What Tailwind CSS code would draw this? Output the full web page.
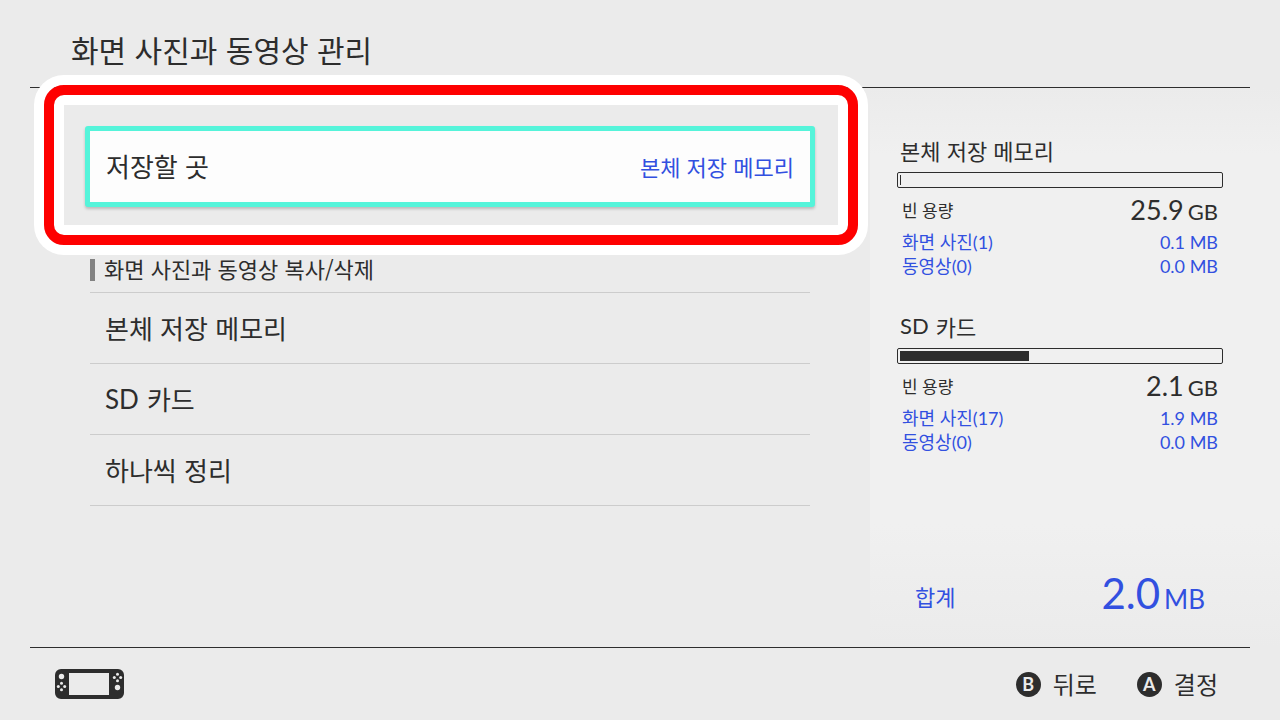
<!DOCTYPE html>
<html lang="ko">
<head>
    <meta charset="UTF-8">
    <meta name="viewport" content="width=device-width, initial-scale=1.0">
    <title>화면 사진과 동영상 관리</title>
    <script src="https://cdn.jsdelivr.net/npm/@tailwindcss/browser@4"></script>
</head>
<body class="min-h-screen flex flex-col bg-[#ebebeb] text-[#2d2d2d] font-['Noto_Sans_CJK_KR',sans-serif]">
    <header class="px-[30px]">
        <h1 class="h-[88px] pt-[10px] px-[41px] border-b border-[#2d2d2d] flex items-center text-[30px] leading-8">화면 사진과 동영상 관리</h1>
    </header>

    <main class="flex-1 flex">
        <!-- Settings list -->
        <section class="flex-1 pl-[90px] pr-[60px] pt-[38px]">
            <div class="relative -mx-[5px]">
                <button type="button" class="w-full h-[81px] px-4 pb-[2px] flex items-center justify-between rounded-[3px] border-5 border-[#55f4da] bg-[#fdfdfd] shadow-[0_2px_3px_rgba(0,0,0,0.2)]">
                    <span class="text-[26px] leading-8">저장할 곳</span>
                    <span class="text-[22px] leading-8 text-[#3250e0]">본체 저장 메모리</span>
                </button>
                <!-- Callout frame around the button -->
                <div class="absolute -inset-[41px] -bottom-[38px] -right-[43px] rounded-[20px] border-10 border-[#fe0000] shadow-[0_0_0_10px_#fff,inset_0_0_0_10px_#fff] pointer-events-none"></div>
            </div>

            <h2 class="mt-[45px] h-[41px] pb-2 flex items-center gap-[9px] border-b border-[#cccccc] text-[22px] leading-8">
                <span class="w-[5px] h-[22px] mt-1 bg-[#828282]"></span>화면 사진과 동영상 복사/삭제
            </h2>
            <ul class="text-[26px] leading-8">
                <li><a href="#internal" class="h-[71px] px-[15px] flex items-center border-b border-[#cccccc]">본체 저장 메모리</a></li>
                <li><a href="#sd" class="h-[71px] px-[15px] flex items-center gap-2 border-b border-[#cccccc]"><span class="font-['Lato',sans-serif]">SD</span> 카드</a></li>
                <li><a href="#each" class="h-[71px] px-[15px] flex items-center border-b border-[#cccccc]">하나씩 정리</a></li>
            </ul>
        </section>

        <!-- Storage usage -->
        <aside class="w-[410px] pl-[27px] pr-[57px] pt-[46px] pb-6 flex flex-col bg-[linear-gradient(#ebebeb,#f0f0f0_12%,#f0f0f0_78%,#ebebeb)]">
            <section class="h-[176px]">
                <h2 class="px-[3px] text-[22px] leading-8">본체 저장 메모리</h2>
                <div role="meter" aria-label="본체 저장 메모리" aria-valuenow="0" class="mt-[6px] h-4 p-[2px] border border-[#2d2d2d] rounded-[2px]">
                    <div class="h-full min-w-px bg-[#2d2d2d]" style="width: 0%"></div>
                </div>
                <dl class="pt-1 px-[5px] text-[18px] leading-6 font-['Lato','Noto_Sans_CJK_KR',sans-serif]">
                    <div class="h-[38px] flex items-center justify-between">
                        <dt class="text-[17px]">빈 용량</dt>
                        <dd class="flex items-baseline gap-1 text-[27px] leading-9">25.9 <span class="text-[22px]">GB</span></dd>
                    </div>
                    <div class="flex justify-between text-[#3250e0]"><dt>화면 사진(1)</dt><dd>0.1 MB</dd></div>
                    <div class="flex justify-between text-[#3250e0]"><dt>동영상(0)</dt><dd>0.0 MB</dd></div>
                </dl>
            </section>
            <section class="h-[176px]">
                <h2 class="px-[3px] text-[22px] leading-8 flex items-center gap-[7px]"><span class="font-['Lato',sans-serif]">SD</span> 카드</h2>
                <div role="meter" aria-label="SD 카드" aria-valuenow="40" class="mt-[6px] h-4 p-[2px] border border-[#2d2d2d] rounded-[2px]">
                    <div class="h-full min-w-px bg-[#2d2d2d]" style="width: 40.3%"></div>
                </div>
                <dl class="pt-1 px-[5px] text-[18px] leading-6 font-['Lato','Noto_Sans_CJK_KR',sans-serif]">
                    <div class="h-[38px] flex items-center justify-between">
                        <dt class="text-[17px]">빈 용량</dt>
                        <dd class="flex items-baseline gap-1 text-[27px] leading-9">2.1 <span class="text-[22px]">GB</span></dd>
                    </div>
                    <div class="flex justify-between text-[#3250e0]"><dt>화면 사진(17)</dt><dd>1.9 MB</dd></div>
                    <div class="flex justify-between text-[#3250e0]"><dt>동영상(0)</dt><dd>0.0 MB</dd></div>
                </dl>
            </section>
            <p class="mt-auto px-[18px] flex items-center justify-between text-[22px] text-[#3250e0]">
                <span>합계</span>
                <span class="flex items-baseline gap-1 text-[42px] leading-12 font-['Lato',sans-serif]">2.0 <span class="text-[26px]">MB</span></span>
            </p>
        </aside>
    </main>

    <footer class="px-[30px]">
        <div class="h-[73px] pl-[25px] pr-8 border-t border-[#2d2d2d] flex items-center justify-between">
            <svg class="w-[69px] h-[30px]" viewBox="0 0 69 30" role="img" aria-label="본체">
                <path fill="#2d2d2d" fill-rule="evenodd" d="M6 0h57a6 6 0 0 1 6 6v18a6 6 0 0 1-6 6H6a6 6 0 0 1-6-6V6a6 6 0 0 1 6-6zM14 4v22h40V4z"/>
                <g fill="#ebebeb">
                    <circle cx="6.5" cy="7.5" r="2.7"/>
                    <circle cx="6.5" cy="14.3" r="1.5"/>
                    <circle cx="3.3" cy="17.5" r="1.5"/>
                    <circle cx="9.7" cy="17.5" r="1.5"/>
                    <circle cx="6.5" cy="20.7" r="1.5"/>
                    <circle cx="62.5" cy="5.3" r="1.5"/>
                    <circle cx="59.3" cy="8.5" r="1.5"/>
                    <circle cx="65.7" cy="8.5" r="1.5"/>
                    <circle cx="62.5" cy="11.7" r="1.5"/>
                    <circle cx="62.5" cy="18.5" r="2.7"/>
                </g>
            </svg>
            <div class="flex gap-10 text-[24px] leading-8">
                <button type="button" class="flex items-center gap-3">
                    <span class="size-[25px] rounded-full bg-[#2d2d2d] text-[#ebebeb] text-[18px] leading-6 font-bold font-['Lato',sans-serif] flex items-center justify-center">B</span>뒤로
                </button>
                <button type="button" class="flex items-center gap-3">
                    <span class="size-[25px] rounded-full bg-[#2d2d2d] text-[#ebebeb] text-[18px] leading-6 font-bold font-['Lato',sans-serif] flex items-center justify-center">A</span>결정
                </button>
            </div>
        </div>
    </footer>
</body>
</html>
